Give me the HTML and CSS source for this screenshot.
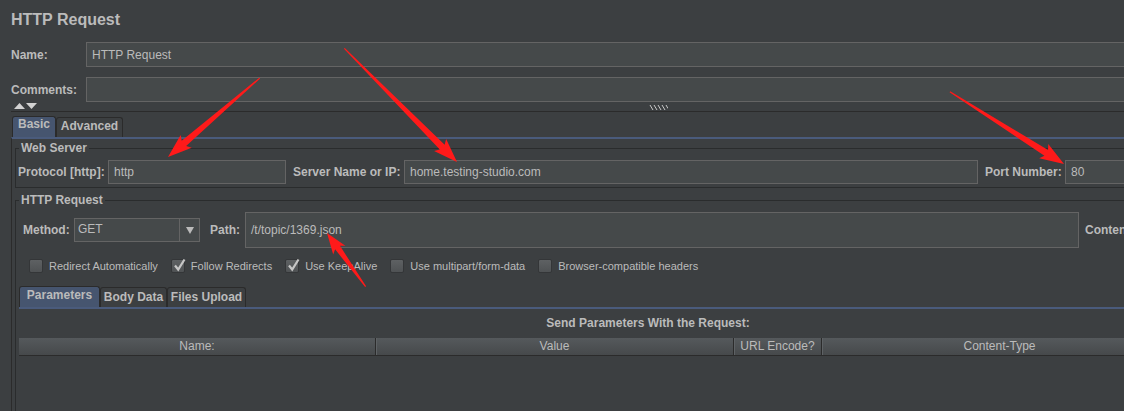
FILE: index.html
```html
<!DOCTYPE html>
<html>
<head>
<meta charset="utf-8">
<title>HTTP Request</title>
<link rel="stylesheet" href="styles.css">
</head>
<body>
<div class="app">
  <h1 class="title">HTTP Request</h1>
  <div class="form-row">
    <span class="lbl lbl-main">Name:</span>
    <div class="field field-wide">HTTP Request</div>
  </div>
  <div class="form-row comments">
    <span class="lbl lbl-main">Comments:</span>
    <div class="field field-wide"></div>
  </div>
  <div class="splitter">
    <svg class="split-arrows" width="23" height="6" viewBox="0 0 23 6"><polygon points="0,6 5.5,0 11,6"/><polygon points="12,0 23,0 17.5,6"/></svg>
    <svg class="grip" width="19" height="5" viewBox="0 0 19 5"><path d="M1 0 L4 5 M5 0 L8 5 M9 0 L12 5 M13 0 L16 5 M17 0 L19 3.5"/></svg>
  </div>
  <div class="tabs">
    <div class="tab tab-basic active">Basic</div>
    <div class="tab tab-adv">Advanced</div>
  </div>
  <div class="tab-content">
    <fieldset class="group group-server">
      <legend>Web Server</legend>
      <div class="server-row">
        <span class="lbl lbl-proto">Protocol [http]:</span>
        <div class="field f-proto">http</div>
        <span class="lbl lbl-server">Server Name or IP:</span>
        <div class="field f-server">home.testing-studio.com</div>
        <span class="lbl lbl-port">Port Number:</span>
        <div class="field f-port">80</div>
      </div>
    </fieldset>
    <fieldset class="group group-request">
      <legend>HTTP Request</legend>
      <div class="method-row">
        <span class="lbl lbl-method">Method:</span>
        <div class="select">
          <span class="select-value">GET</span>
          <span class="select-btn"><svg width="8" height="7" viewBox="0 0 8 7"><polygon points="0,0 8,0 4,7"/></svg></span>
        </div>
        <span class="lbl lbl-path">Path:</span>
        <div class="field f-path">/t/topic/1369.json</div>
        <span class="lbl lbl-enc">Content Encoding:</span>
      </div>
      <div class="checks">
        <label class="cb"><span class="box"></span><span>Redirect Automatically</span></label>
        <label class="cb"><span class="box"><svg viewBox="0 0 14 14" width="14" height="14"><path d="M3 6.5 L6.2 10.5 L12.5 0.5"/></svg></span><span>Follow Redirects</span></label>
        <label class="cb"><span class="box"><svg viewBox="0 0 14 14" width="14" height="14"><path d="M3 6.5 L6.2 10.5 L12.5 0.5"/></svg></span><span>Use KeepAlive</span></label>
        <label class="cb"><span class="box"></span><span>Use multipart/form-data</span></label>
        <label class="cb"><span class="box"></span><span>Browser-compatible headers</span></label>
      </div>
      <div class="subtabs">
        <div class="subtab st-params active">Parameters</div>
        <div class="subtab st-body">Body Data</div>
        <div class="subtab st-files">Files Upload</div>
      </div>
      <div class="params">
        <div class="params-title">Send Parameters With the Request:</div>
        <div class="thead">
          <div class="th c-name">Name:</div>
          <div class="th c-value">Value</div>
          <div class="th c-enc">URL Encode?</div>
          <div class="th c-type">Content-Type</div>
        </div>
      </div>
    </fieldset>
  </div>
</div>
<svg class="annotations" width="1124" height="411" viewBox="0 0 1124 411">
  <g transform="translate(168 157) rotate(139.3)"><polygon points="-121,-0.6 -21,-3.4 -24,-8.5 0,0 -24,8.5 -21,3.4 -121,0.6"/></g>
  <g transform="translate(457 162) rotate(45.25)"><polygon points="-160,-0.6 -21,-3.4 -24,-8.5 0,0 -24,8.5 -21,3.4 -160,0.6"/></g>
  <g transform="translate(1064 164) rotate(32.3)"><polygon points="-135,-0.6 -21,-3.4 -24,-8.5 0,0 -24,8.5 -21,3.4 -135,0.6"/></g>
  <g transform="translate(327 233) rotate(-125.8)"><polygon points="-66,-0.6 -18,-3 -21,-7.5 0,0 -21,7.5 -18,3 -66,0.6"/></g>
</svg>
</body>
</html>
```
FILE: styles.css
```css
* { box-sizing: border-box; }
html, body { margin: 0; padding: 0; }
body {
  width: 1124px;
  height: 411px;
  overflow: hidden;
  position: relative;
  background: #3c3f41;
  color: #bbbbbb;
  font-family: "Liberation Sans", Arial, sans-serif;
  font-size: 12px;
}
.app { width: 1330px; padding-left: 11px; }
.title {
  margin: 0;
  padding-top: 10px;
  height: 42px;
  font-size: 16px;
  line-height: 20px;
  font-weight: bold;
}
.form-row { display: flex; align-items: center; height: 25px; }
.form-row.comments { margin-top: 10px; }
.lbl { font-weight: bold; white-space: nowrap; flex: none; }
.lbl-main { width: 75px; }
.field {
  flex: none;
  height: 100%;
  background: #45494a;
  border: 1px solid #646464;
  padding-left: 5px;
  display: flex;
  align-items: center;
  white-space: nowrap;
  overflow: hidden;
}
.field-wide { flex: 1; }

.splitter {
  height: 10px;
  border-bottom: 1px solid #2b2b2b;
  display: flex;
  align-items: flex-start;
}
.split-arrows { margin: 1px 0 0 3px; fill: #d2d2d2; }
.grip { margin: 3px 0 0 612px; stroke: #c8c8c8; stroke-width: 1; fill: none; }

.tabs { display: flex; align-items: flex-end; height: 25px; padding-left: 1px; }
.tab {
  height: 20px;
  border: 1px solid #2b2b2b;
  border-bottom: none;
  border-radius: 3px 3px 0 0;
  font-weight: bold;
  line-height: 17px;
  text-align: center;
}
.tab.active { height: 21px; background: #46556f; line-height: 15px; }
.tab-basic { width: 44px; }
.tab-adv { width: 67px; }

.tab-content {
  border-top: 2px solid #4a5b7c;
  border-left: 1px solid #2b2b2b;
  height: 300px;
  padding-left: 3px;
}
.group {
  margin: 0;
  padding: 0;
  min-width: 0;
  width: 1300px;
  border: 1px solid #2a2c2d;
}
.group legend {
  margin-left: 3px;
  padding: 0 2px;
  font-weight: bold;
  font-size: 12px;
  line-height: 14px;
}
.group-server { margin-top: 2px; }
.server-row {
  display: flex;
  align-items: center;
  height: 24px;
  margin: 5px 0 3px;
  padding-left: 2px;
}
.lbl-proto { width: 90px; }
.f-proto { width: 178px; }
.lbl-server { width: 111px; margin-left: 7px; }
.f-server { width: 574px; }
.lbl-port { width: 80px; margin-left: 7px; }
.f-port { width: 120px; }

.group-request { margin-top: 5px; height: 260px; }
.method-row {
  display: flex;
  align-items: center;
  height: 36px;
  margin-top: 5px;
  padding-left: 7px;
}
.lbl-method { width: 51px; }
.select {
  flex: none;
  width: 126px;
  height: 24px;
  display: flex;
  background: #45494a;
  border: 1px solid #646464;
}
.select-value { flex: 1; padding-left: 3px; line-height: 20px; }
.select-btn {
  width: 20px;
  border-left: 1px solid #646464;
  display: flex;
  align-items: center;
  justify-content: center;
  fill: #bbbbbb;
}
.lbl-path { width: 35px; margin-left: 10px; }
.f-path { width: 834px; }
.lbl-enc { margin-left: 6px; }

.checks {
  display: flex;
  align-items: center;
  gap: 13px;
  height: 18px;
  margin-top: 9px;
  padding-left: 13px;
  font-size: 11px;
}
.cb { display: flex; align-items: center; gap: 6px; }
.box {
  width: 14px;
  height: 14px;
  border-radius: 2px;
  border: 1px solid #343638;
  background: linear-gradient(#5e6163, #4f5254);
  position: relative;
}
.box svg {
  position: absolute;
  left: 0;
  top: -1px;
  overflow: visible;
  fill: none;
  stroke: #c6c6c6;
  stroke-width: 2.2;
}

.subtabs {
  display: flex;
  align-items: flex-end;
  height: 22px;
  margin: 10px 0 0 3px;
}
.subtab {
  height: 20px;
  border: 1px solid #2b2b2b;
  border-bottom: none;
  border-radius: 3px 3px 0 0;
  font-weight: bold;
  line-height: 19px;
  text-align: center;
}
.subtab.active { height: 21px; background: #46556f; line-height: 17px; }
.st-params { width: 81px; }
.st-body { width: 67px; }
.st-files { width: 79px; }

.params {
  margin-left: 3px;
  width: 1258px;
  border-top: 2px solid #4a5b7c;
}
.params-title {
  padding-top: 7px;
  line-height: 14px;
  text-align: center;
  font-weight: bold;
}
.thead {
  display: flex;
  margin-top: 8px;
  height: 18px;
  background: linear-gradient(#55595c, #46494b);
  border-bottom: 1px solid #2b2b2b;
}
.th {
  flex: none;
  text-align: center;
  line-height: 17px;
  white-space: nowrap;
}
.th + .th { border-left: 1px solid #2b2b2b; box-shadow: inset 1px 0 #5e6265; }
.c-name { width: 356px; }
.c-value { width: 358px; }
.c-enc { width: 88px; }
.c-type { width: 356px; }

.annotations {
  position: absolute;
  left: 0;
  top: 0;
  pointer-events: none;
  fill: #ff1a1a;
}
```
